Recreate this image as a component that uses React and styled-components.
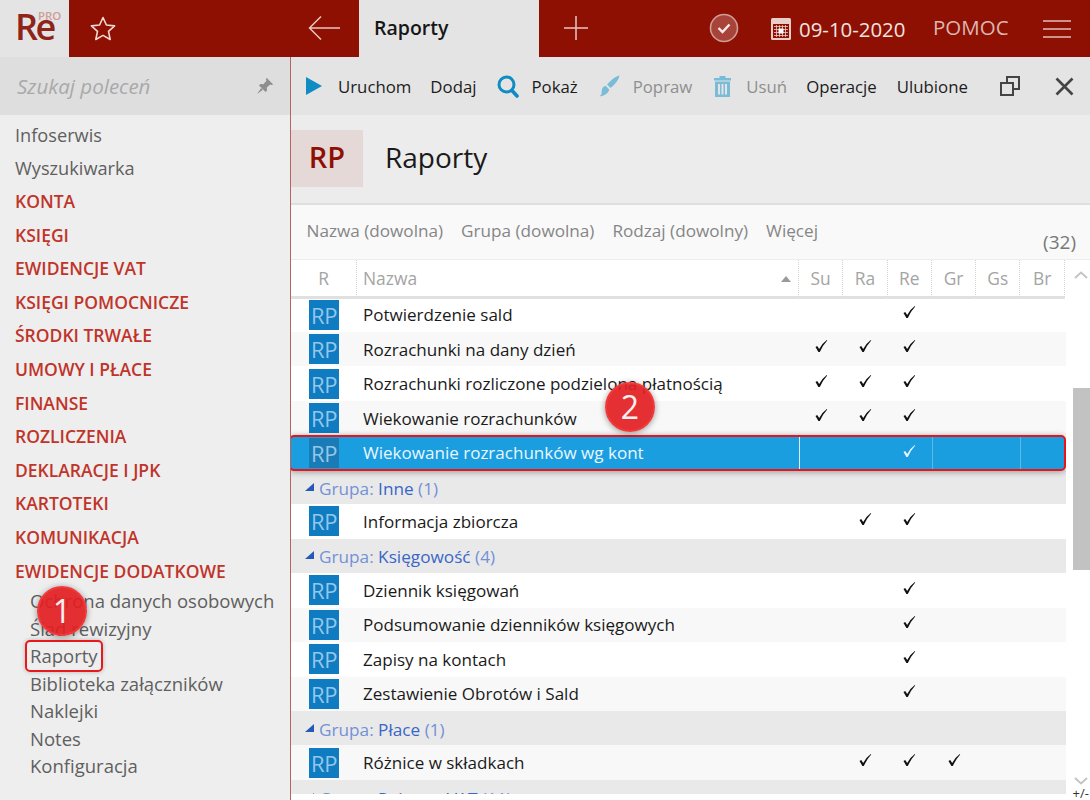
import React from "react";
import styled, { createGlobalStyle } from "styled-components";

const GlobalStyle = createGlobalStyle`
  html, body { margin: 0; padding: 0; background: #fff; }
  * { box-sizing: border-box; }
  body { font-family: "Open Sans", "Noto Sans", sans-serif; color: #1a1a1a; }
`;

const menuTop = ["Infoserwis", "Wyszukiwarka"];
const menuSections = [
  "KONTA", "KSIĘGI", "EWIDENCJE VAT", "KSIĘGI POMOCNICZE", "ŚRODKI TRWAŁE", "UMOWY I PŁACE",
  "FINANSE", "ROZLICZENIA", "DEKLARACJE I JPK", "KARTOTEKI", "KOMUNIKACJA", "EWIDENCJE DODATKOWE",
];
const menuSub = ["Ochrona danych osobowych", "Ślad rewizyjny", "Raporty", "Biblioteka załączników", "Naklejki", "Notes", "Konfiguracja"];

const rows = [
  { name: "Potwierdzenie sald", checks: [0, 0, 1, 0, 0, 0] },
  { name: "Rozrachunki na dany dzień", checks: [1, 1, 1, 0, 0, 0], alt: true },
  { name: "Rozrachunki rozliczone podzielona płatnością", checks: [1, 1, 1, 0, 0, 0] },
  { name: "Wiekowanie rozrachunków", checks: [1, 1, 1, 0, 0, 0], alt: true },
  { name: "Wiekowanie rozrachunków wg kont", checks: [0, 0, 1, 0, 0, 0], selected: true },
  { group: "Inne", count: 1 },
  { name: "Informacja zbiorcza", checks: [0, 1, 1, 0, 0, 0] },
  { group: "Księgowość", count: 4 },
  { name: "Dziennik księgowań", checks: [0, 0, 1, 0, 0, 0] },
  { name: "Podsumowanie dzienników księgowych", checks: [0, 0, 1, 0, 0, 0], alt: true },
  { name: "Zapisy na kontach", checks: [0, 0, 1, 0, 0, 0] },
  { name: "Zestawienie Obrotów i Sald", checks: [0, 0, 1, 0, 0, 0], alt: true },
  { group: "Płace", count: 1 },
  { name: "Różnice w składkach", checks: [0, 1, 1, 1, 0, 0], alt: true },
  { group: "Rejestry VAT", count: 11 },
];

const columns = ["Su", "Ra", "Re", "Gr", "Gs", "Br"];

const Check = ({ light }) => (
  <svg width="14" height="14" viewBox="0 0 14 14">
    <path d="M1.5 8 L3.2 7 L5.2 10 Q8 4.5 12.8 1 L13.2 1.6 Q8.8 6.5 5.8 13 L4.4 13 Z" fill={light ? "#e6f4fc" : "#111"} />
  </svg>
);

function App() {
  return (
    <>
      <GlobalStyle />
      <Page>
        <TopBar>
          <Logo>
            Re<sup>PRO</sup>
          </Logo>
          <RedLeft>
            <svg width="28" height="27" viewBox="0 0 28 27" fill="none" stroke="#f0d8d4" strokeWidth="1.6" strokeLinejoin="round">
              <path d="M14 2.5 L17.4 10 L25.6 10.9 L19.5 16.4 L21.2 24.5 L14 20.4 L6.8 24.5 L8.5 16.4 L2.4 10.9 L10.6 10 Z" />
            </svg>
            <BackArrow width="33" height="26" viewBox="0 0 33 26" fill="none" stroke="#e8c6c1" strokeWidth="1.5">
              <path d="M1.5 13 H32 M13 1.5 L1.5 13 L13 24.5" />
            </BackArrow>
          </RedLeft>
          <Tab>Raporty</Tab>
          <RedRight>
            <PlusIcon width="26" height="26" viewBox="0 0 26 26" stroke="#e8c6c1" strokeWidth="1.5">
              <path d="M13 1 V25 M1 13 H25" />
            </PlusIcon>
            <StatusIcon width="30" height="30" viewBox="0 0 30 30" fill="none">
              <circle cx="15" cy="15" r="13.5" fill="#a8433a" stroke="#cf9c96" strokeWidth="1.6" />
              <path d="M9.5 15 L13.5 19 L20.5 11.5" stroke="#f8ecea" strokeWidth="2.4" />
            </StatusIcon>
            <svg width="20" height="22" viewBox="0 0 20 22">
              <rect x="0" y="0" width="20" height="22" rx="1.5" fill="#e9cdc9" />
              <rect x="2" y="6" width="16" height="14" fill="#8d1002" />
              <path d="M3 8.5 H17 M3 11.5 H17 M3 14.5 H17 M3 17.5 H17 M5.5 7 V19 M8.5 7 V19 M11.5 7 V19 M14.5 7 V19" stroke="#e9cdc9" strokeWidth="0.8" />
              <rect x="7.5" y="10.5" width="5" height="5" fill="#fff" />
            </svg>
            <DateText>09-10-2020</DateText>
            <HelpText>POMOC</HelpText>
            <svg width="28" height="18" viewBox="0 0 28 18" stroke="#e3bdb8" strokeWidth="1.6">
              <path d="M0 1 H28 M0 9 H28 M0 17 H28" />
            </svg>
          </RedRight>
        </TopBar>

        <Body>
          <Sidebar>
            <SearchBox>
              <SearchHint>Szukaj poleceń</SearchHint>
              <svg width="18" height="18" viewBox="0 0 18 18" fill="#8e8e8e">
                <path d="M10.6 0.8 L17.2 7.4 L15.8 8 L14.2 7.6 L10.8 10.6 L11 13.6 L9.6 15 L3 8.4 L4.4 7 L7.4 7.2 L10.4 3.8 L10 2.2 Z" />
                <path d="M5.2 11 L6.9 12.7 L1 17 Z" />
              </svg>
            </SearchBox>
            <Menu>
              <MenuTop>
                {menuTop.map((item) => (
                  <MenuItem key={item}>{item}</MenuItem>
                ))}
              </MenuTop>
              {menuSections.map((item) => (
                <MenuSection key={item}>{item}</MenuSection>
              ))}
              <SubMenu>
                {menuSub.map((item) => (
                  <SubItem key={item}>
                    <SubLabel $marked={item === "Raporty"}>{item}</SubLabel>
                  </SubItem>
                ))}
              </SubMenu>
            </Menu>
          </Sidebar>

          <Main>
            <Toolbar>
              <ToolButton $gap={16}>
                <svg width="16" height="18" viewBox="0 0 16 18"><path d="M0 0 L16 9 L0 18 Z" fill="#0f8cc4" /></svg>
                Uruchom
              </ToolButton>
              <ToolButton $shift={-1}>Dodaj</ToolButton>
              <ToolButton $shift={1}>
                <svg width="22" height="23" viewBox="0 0 22 23" fill="none" stroke="#0f8cc4">
                  <circle cx="9.5" cy="9.5" r="7.5" strokeWidth="3" />
                  <path d="M15 15.5 L20 21" strokeWidth="3.6" strokeLinecap="round" />
                </svg>
                Pokaż
              </ToolButton>
              <ToolButton $disabled $shift={1} $gap={13}>
                <svg width="21" height="22" viewBox="0 0 21 22" fill="#78bcd8">
                  <path d="M20.6 0.4 Q15 1.5 8 9.5 L11.5 13 Q19 7 20.6 0.4 Z" />
                  <path d="M6.6 10.8 L10.2 14.4 Q9.5 19.5 0.6 21.6 Q3.5 18.5 2.8 15.5 Q3.2 12 6.6 10.8 Z" />
                </svg>
                Popraw
              </ToolButton>
              <ToolButton $disabled $shift={2} $gap={15}>
                <svg width="17" height="21" viewBox="0 0 17 21" fill="#78bcd8">
                  <path d="M5.5 0 H11.5 V2 H17 V4.5 H0 V2 H5.5 Z" />
                  <path d="M1 5.5 H16 V21 H1 Z M4 8 V18.5 H6 V8 Z M7.5 8 V18.5 H9.5 V8 Z M11 8 V18.5 H13 V8 Z" fillRule="evenodd" />
                </svg>
                Usuń
              </ToolButton>
              <ToolButton $shift={-1}>Operacje</ToolButton>
              <ToolButton>Ulubione</ToolButton>
              <WindowIcons>
                <svg width="20" height="20" viewBox="0 0 20 20" fill="none" stroke="#444" strokeWidth="2">
                  <rect x="1" y="7" width="12" height="12" />
                  <path d="M7 7 V1 H19 V13 H13" />
                </svg>
                <svg width="19" height="19" viewBox="0 0 19 19" stroke="#444" strokeWidth="2.6">
                  <path d="M1.5 1.5 L17.5 17.5 M17.5 1.5 L1.5 17.5" />
                </svg>
              </WindowIcons>
            </Toolbar>

            <TitleBar>
              <TitleBadge>RP</TitleBadge>
              <Title>Raporty</Title>
            </TitleBar>

            <FilterBar>
              <FilterItem>Nazwa (dowolna)</FilterItem>
              <FilterItem>Grupa (dowolna)</FilterItem>
              <FilterItem>Rodzaj (dowolny)</FilterItem>
              <FilterItem>Więcej</FilterItem>
              <Count>(32)</Count>
            </FilterBar>

            <TableArea>
              <Table>
                <HeadRow>
                  <HeadCell $center>R</HeadCell>
                  <HeadCell>
                    Nazwa
                    <SortMark />
                  </HeadCell>
                  {columns.map((c) => (
                    <HeadCell $center key={c}>{c}</HeadCell>
                  ))}
                </HeadRow>
                <RowList>
                  {rows.map((row) =>
                    row.group ? (
                      <GroupRow key={row.group}>
                        <GroupMark />
                        <GroupLabel>Grupa: </GroupLabel>
                        <GroupName>{row.group}</GroupName>
                        <GroupLabel> ({row.count})</GroupLabel>
                      </GroupRow>
                    ) : (
                      <Row key={row.name} $alt={row.alt} $selected={row.selected}>
                        <IconCell>
                          <RpIcon $selected={row.selected}>RP</RpIcon>
                        </IconCell>
                        <NameCell>{row.name}</NameCell>
                        {row.checks.map((on, i) => (
                          <CheckCell key={i} $selected={row.selected} $col={i}>
                            {on ? <Check light={row.selected} /> : null}
                          </CheckCell>
                        ))}
                      </Row>
                    )
                  )}
                </RowList>
              </Table>
              <Scrollbar>
                <svg width="14" height="8" viewBox="0 0 14 8" fill="none" stroke="#c4c4c4" strokeWidth="2"><path d="M1 7 L7 1.5 L13 7" /></svg>
                <Thumb />
                <DownArrow width="14" height="8" viewBox="0 0 14 8" fill="none" stroke="#c4c4c4" strokeWidth="2"><path d="M1 1 L7 6.5 L13 1" /></DownArrow>
                <Toggle>+/-</Toggle>
              </Scrollbar>
            </TableArea>
          </Main>
        </Body>

        <Badge $x={37} $y={586}>1</Badge>
        <Badge $x={605} $y={382}>2</Badge>
      </Page>
    </>
  );
}

export default App;

const Page = styled.div`
  position: relative;
  width: 1090px;
  height: 800px;
  overflow: hidden;
  display: flex;
  flex-direction: column;
`;
const TopBar = styled.div`
  height: 57px;
  flex: none;
  display: flex;
  background: #8d1002;
`;
const Logo = styled.div`
  width: 69px;
  background: #e4e4e4;
  padding: 4px 0 0 15px;
  color: #8f2419;
  font-size: 36px;
  font-weight: 600;
  letter-spacing: -2.4px;
  line-height: 46px;
  > sup {
    font-size: 11.5px;
    font-weight: 600;
    line-height: 0;
    letter-spacing: 0;
    color: #cf9d98;
    vertical-align: 20px;
    margin-left: -16px;
  }
`;
const RedLeft = styled.div`
  width: 290px;
  display: flex;
  align-items: center;
  padding-left: 20px;
  background: #8d1002;
`;
const BackArrow = styled.svg`
  margin-left: 191px;
  margin-top: -2px;
`;
const Tab = styled.div`
  width: 180px;
  background: #e4e4e4;
  padding-left: 15px;
  font-size: 19.5px;
  font-weight: 600;
  line-height: 56px;
  color: #161616;
`;
const RedRight = styled.div`
  flex: 1;
  display: flex;
  align-items: center;
  padding-left: 24px;
`;
const PlusIcon = styled.svg`
  margin-right: 120px;
  margin-top: -2px;
`;
const StatusIcon = styled.svg`
  margin-right: 32px;
  margin-top: -2px;
`;
const DateText = styled.div`
  margin-left: 8px;
  font-size: 20.4px;
  color: #f3e3e1;
  width: 134px;
`;
const HelpText = styled.div`
  font-size: 20.5px;
  color: #dcb6b1;
  width: 110px;
  margin-top: -4px;
`;
const Body = styled.div`
  flex: 1;
  min-height: 0;
  display: flex;
`;
const Sidebar = styled.div`
  width: 291px;
  flex: none;
  background: #eeeeee;
  border-right: 1px solid #b4655d;
`;
const SearchBox = styled.div`
  height: 58px;
  background: #dedede;
  display: flex;
  align-items: center;
  justify-content: space-between;
  padding: 0 16px 0 17px;
`;
const SearchHint = styled.div`
  font-size: 20.5px;
  font-style: italic;
  color: #a9a9a9;
`;
const Menu = styled.div`
  padding-top: 4px;
`;
const MenuTop = styled.div`
  padding-bottom: 1px;
`;
const MenuItem = styled.div`
  height: 32.5px;
  line-height: 32.5px;
  padding-left: 15px;
  font-size: 18.2px;
  color: #5f5f5f;
`;
const MenuSection = styled.div`
  height: 33.6px;
  line-height: 33.6px;
  padding-left: 15px;
  font-size: 17.5px;
  font-weight: 600;
  color: #c0342a;
`;
const SubMenu = styled.div`
  margin-top: -1px;
  padding: 0 0 0 30px;
`;
const SubItem = styled.div`
  height: 27.5px;
  line-height: 27.5px;
  font-size: 18.5px;
  color: #5f5f5f;
  white-space: nowrap;
`;
const SubLabel = styled.span`
  display: inline-block;
  vertical-align: top;
  ${(p) =>
    p.$marked &&
    `
    border: 2px solid #e8191c;
    border-radius: 5px;
    padding: 0 3px;
    margin: -2px 0 -2px -5px;
    box-shadow: 0 0 4px rgba(0,0,0,.25);
  `}
`;
const Main = styled.div`
  flex: 1;
  min-width: 0;
  display: flex;
  flex-direction: column;
`;
const Toolbar = styled.div`
  height: 58px;
  flex: none;
  background: #e4e4e4;
  display: flex;
  align-items: center;
  gap: 20px;
  padding: 0 16px 0 15px;
`;
const ToolButton = styled.div`
  display: flex;
  align-items: center;
  gap: ${(p) => p.$gap || 12}px;
  margin-left: ${(p) => p.$shift || 0}px;
  font-size: 16.8px;
  color: ${(p) => (p.$disabled ? "#8f8f8f" : "#1c1c1c")};
  white-space: nowrap;
`;
const WindowIcons = styled.div`
  margin-left: auto;
  display: flex;
  align-items: center;
  gap: 35px;
`;
const TitleBar = styled.div`
  height: 90px;
  flex: none;
  background: #ececec;
  border-bottom: 2px solid #dedede;
  display: flex;
  align-items: flex-start;
  padding-top: 15px;
`;
const TitleBadge = styled.div`
  width: 72px;
  height: 57px;
  background: #e5d9d8;
  color: #8d1002;
  font-size: 29px;
  font-weight: 600;
  line-height: 54px;
  text-align: center;
`;
const Title = styled.div`
  margin-left: 22px;
  font-size: 28px;
  line-height: 54px;
  color: #1a1a1a;
`;
const FilterBar = styled.div`
  height: 55px;
  flex: none;
  background: #f9f9f9;
  border-bottom: 1px solid #ececec;
  display: flex;
  align-items: center;
  gap: 18px;
  padding: 0 14px 4px 15.5px;
`;
const FilterItem = styled.div`
  font-size: 17.15px;
  color: #868686;
  white-space: nowrap;
`;
const Count = styled.div`
  margin-left: auto;
  align-self: flex-end;
  font-size: 19px;
  line-height: 24px;
  color: #777;
  margin-bottom: 1px;
`;
const TableArea = styled.div`
  flex: 1;
  min-height: 0;
  display: flex;
`;
const Table = styled.div`
  width: 775px;
  flex: none;
  display: flex;
  flex-direction: column;
`;
const gridColumns = "66px 442px repeat(6, 44.3px)";
const HeadRow = styled.div`
  height: 36px;
  flex: none;
  display: grid;
  grid-template-columns: ${gridColumns};
  background: #fff;
`;
const HeadCell = styled.div`
  position: relative;
  border-bottom: 3px solid #e0e0e0;
  border-right: 1px dotted #d4d4d4;
  padding-left: ${(p) => (p.$center ? 0 : "6px")};
  text-align: ${(p) => (p.$center ? "center" : "left")};
  font-size: 17.4px;
  font-weight: 500;
  line-height: 36px;
  color: #a4a4a4;
`;
const SortMark = styled.span`
  position: absolute;
  right: 7px;
  top: 16px;
  border-left: 5.5px solid transparent;
  border-right: 5.5px solid transparent;
  border-bottom: 6px solid #9a9a9a;
`;
const RowList = styled.div`
  height: 498px;
  padding-top: 1.5px;
  overflow: hidden;
`;
const Row = styled.div`
  height: 34.46px;
  display: grid;
  grid-template-columns: ${gridColumns};
  align-items: center;
  background: ${(p) => (p.$selected ? "#1a9ee0" : p.$alt ? "#f8f8f8" : "#fff")};
  ${(p) =>
    p.$selected &&
    `
    position: relative;
    height: 36px;
    margin: -0.77px 0 -0.77px -2px;
    border: 2px solid #e8141a;
    border-radius: 5px;
    box-shadow: 0 1px 6px rgba(0,0,0,.35);
    color: #eaf6fd;
    z-index: 1;
  `}
`;
const IconCell = styled.div`
  padding-left: 18px;
  display: flex;
`;
const RpIcon = styled.div`
  width: 30px;
  height: 30px;
  background: ${(p) => (p.$selected ? "#1a7cb6" : "#0f7bc0")};
  color: #93c7ea;
  font-size: 22px;
  line-height: 30px;
  text-align: center;
  letter-spacing: -0.5px;
`;
const NameCell = styled.div`
  padding-left: 6px;
  font-size: 17.05px;
  white-space: nowrap;
`;
const CheckCell = styled.div`
  height: 100%;
  display: flex;
  justify-content: center;
  padding-top: 7.5px;
  padding-right: 1px;
  ${(p) =>
    p.$selected && (p.$col === 0 || p.$col === 3 || p.$col === 5)
      ? `border-left: ${p.$col === 0 ? "1.5px solid #d8eefa" : "1px solid #5cb8e8"};`
      : ""}
`;
const GroupRow = styled.div`
  height: 34.46px;
  display: flex;
  align-items: center;
  padding: 2px 0 0 14px;
  background: #e9e9e9;
  font-size: 17.2px;
  white-space: pre;
`;
const GroupMark = styled.span`
  width: 0;
  height: 0;
  margin: -3px 5px 0 0;
  border-bottom: 8px solid #2459b8;
  border-left: 9px solid transparent;
`;
const GroupLabel = styled.span`
  color: #7391d6;
`;
const GroupName = styled.span`
  color: #3a66c8;
`;
const Scrollbar = styled.div`
  flex: 1;
  background: #fff;
  display: flex;
  flex-direction: column;
  align-items: flex-end;
  padding: 11px 2px 0 0;
`;
const Thumb = styled.div`
  width: 17px;
  height: 182px;
  margin: 109px -2px 0 0;
  background: #c2c2c2;
`;
const DownArrow = styled.svg`
  margin-top: 207px;
`;
const Toggle = styled.div`
  font-size: 13px;
  line-height: 14px;
  margin: 1px -1px 0 0;
  color: #333;
  white-space: nowrap;
`;
const Badge = styled.div`
  position: absolute;
  left: ${(p) => p.$x}px;
  top: ${(p) => p.$y}px;
  width: 50px;
  height: 50px;
  border-radius: 50%;
  background: rgba(226, 30, 34, 0.92);
  border: 2px solid #f03a3a;
  box-shadow: 0 1px 6px rgba(0, 0, 0, 0.4);
  color: #f6f0f0;
  font-size: 32px;
  line-height: 46px;
  text-align: center;
  z-index: 2;
`;
